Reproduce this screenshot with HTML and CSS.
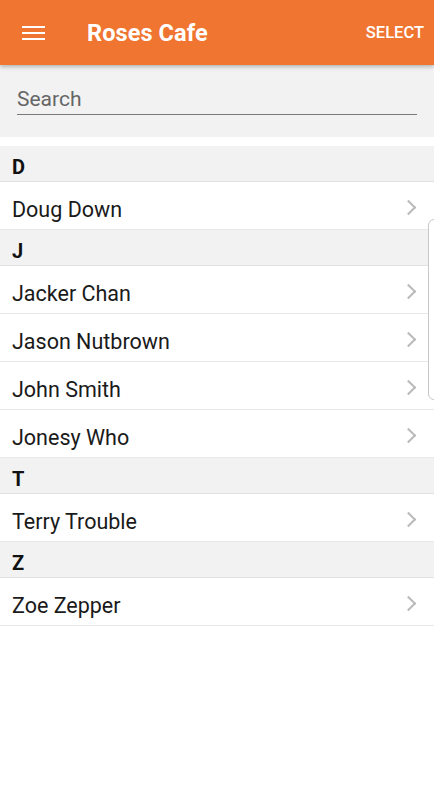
FILE: index.html
```html
<!DOCTYPE html>
<html lang="en">
<head>
  <meta charset="UTF-8">
  <meta name="viewport" content="width=device-width, initial-scale=1.0">
  <title>Roses Cafe</title>
  <link rel="stylesheet" href="styles.css">
</head>
<body>
  <!-- top bar -->
  <header class="toolbar">
    <div class="menu-btn">
      <span></span><span></span><span></span>
    </div>
    <div class="title">Roses Cafe</div>
    <div class="action">SELECT</div>
  </header>

  <!-- search -->
  <div class="search-bar">
    <div class="search-input">Search</div>
  </div>

  <!-- contact list -->
  <div class="list">
    <div class="section">D</div>
    <div class="row"><span>Doug Down</span><i class="chev"></i></div>

    <div class="section">J</div>
    <div class="row"><span>Jacker Chan</span><i class="chev"></i></div>
    <div class="row"><span>Jason Nutbrown</span><i class="chev"></i></div>
    <div class="row"><span>John Smith</span><i class="chev"></i></div>
    <div class="row"><span>Jonesy Who</span><i class="chev"></i></div>

    <div class="section">T</div>
    <div class="row"><span>Terry Trouble</span><i class="chev"></i></div>

    <div class="section">Z</div>
    <div class="row"><span>Zoe Zepper</span><i class="chev"></i></div>
  </div>

  <!-- edge panel handle -->
  <div class="edge-handle"></div>
</body>
</html>
```

FILE: styles.css
```css
/* page */
body {
  margin: 0;
  font-family: Roboto, "Liberation Sans", sans-serif;
  background: #fff;
  color: #1a1a1a;
  width: 434px;
  height: 800px;
  overflow: hidden;
  position: relative;
}

/* toolbar */
.toolbar {
  height: 65px;
  background: #f07531;
  display: flex;
  align-items: center;
  color: #fff;
  box-shadow: 0 2px 4px rgba(0, 0, 0, 0.25);
  position: relative;
  z-index: 2;
}

.menu-btn {
  width: 23px;
  margin-left: 22px;
  display: flex;
  flex-direction: column;
  gap: 4px;
  margin-top: 1px;
}

.menu-btn span {
  display: block;
  height: 2px;
  background: #fff;
}

.title {
  margin-left: 42px;
  font-size: 23.5px;
  font-weight: 700;
  letter-spacing: 0.1px;
  margin-top: 1px;
}

.action {
  margin-left: auto;
  margin-right: 10px;
  font-size: 16.5px;
  font-weight: 500;
}

/* search */
.search-bar {
  background: #f2f2f2;
  height: 72px;
  padding: 0 17px;
  margin-bottom: 9px;
}

.search-input {
  padding-top: 22px;
  height: 27px;
  font-size: 21px;
  color: #666;
  border-bottom: 1px solid #7a7a7a;
}

/* list */
.section {
  background: #f2f2f2;
  height: 35px;
  line-height: 42px;
  padding-left: 12px;
  font-size: 20px;
  font-weight: 700;
  color: #111;
  border-bottom: 1px solid #e2e2e2;
}

.row {
  box-sizing: border-box;
  height: 48px;
  display: flex;
  align-items: center;
  padding: 8px 20px 0 12px;
  font-size: 21.5px;
  color: #1a1a1a;
  border-bottom: 1px solid #e8e8e8;
}

.row span {
  flex: 1;
}

.chev {
  width: 9px;
  height: 9px;
  border-top: 2px solid #bababa;
  border-right: 2px solid #bababa;
  transform: rotate(45deg);
  margin-top: -4px;
}

/* edge panel */
.edge-handle {
  position: absolute;
  left: 428px;
  top: 219px;
  width: 10px;
  height: 179px;
  border: 1px solid #c8c8c8;
  border-radius: 6px;
  background: #fff;
}
```
